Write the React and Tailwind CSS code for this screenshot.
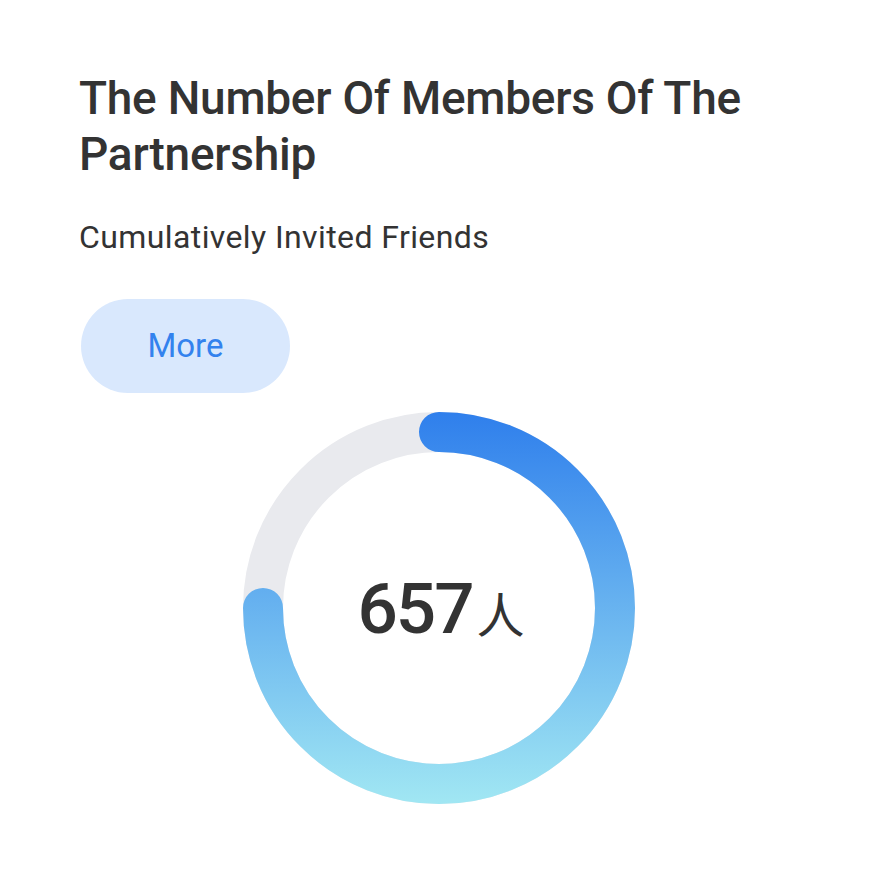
import React from 'react';

const ProgressRing = ({ value = 657, percent = 0.75 }) => {
    const size = 392;
    const stroke = 40;
    const r = (size - stroke) / 2;
    const c = size / 2;
    const angle = percent * 2 * Math.PI;
    const endX = c + r * Math.sin(angle);
    const endY = c - r * Math.cos(angle);
    const largeArc = percent > 0.5 ? 1 : 0;

    return (
        <div className="relative w-[392px] h-[392px]">
            <svg width={size} height={size} viewBox={`0 0 ${size} ${size}`}>
                <defs>
                    <linearGradient id="ringGrad" x1="0" y1="0" x2="0" y2={size} gradientUnits="userSpaceOnUse">
                        <stop offset="0" stopColor="#2f7fec" />
                        <stop offset="1" stopColor="#a1e7f3" />
                    </linearGradient>
                </defs>
                <circle cx={c} cy={c} r={r} fill="none" stroke="#e9eaee" strokeWidth={stroke} />
                <path
                    d={`M ${c} ${c - r} A ${r} ${r} 0 ${largeArc} 1 ${endX} ${endY}`}
                    fill="none"
                    stroke="url(#ringGrad)"
                    strokeWidth={stroke}
                    strokeLinecap="round"
                />
            </svg>
            <div className="absolute inset-0 flex items-center justify-center">
                <span className="text-[#333333] text-[71px] leading-none font-medium tracking-[-2px] font-['Roboto',sans-serif] translate-x-[2px]">
                    {value}
                    <span className="ml-[4px] text-[48px] font-normal tracking-normal font-['Noto_Sans_CJK_SC',sans-serif]">人</span>
                </span>
            </div>
        </div>
    );
};

export default function App() {
    return (
        <div className="min-h-screen bg-white font-['Roboto','Liberation_Sans',sans-serif] pt-[70px] px-[79px]">
            <h1 className="text-[46px] leading-[56px] font-medium tracking-[-0.25px] text-[#333333]">
                The Number Of Members Of The Partnership
            </h1>
            <p className="mt-[37px] text-[32px] leading-[36px] tracking-[0.4px] text-[#333333]">Cumulatively Invited Friends</p>
            <button className="mt-[44px] ml-[2px] w-[209px] h-[94px] rounded-full bg-[#d9e8fd] text-[#3382ee] text-[33px] flex items-center justify-center">
                More
            </button>
            <div className="mt-[19px] flex justify-center -mx-[79px]">
                <ProgressRing value={657} percent={0.75} />
            </div>
        </div>
    );
}
